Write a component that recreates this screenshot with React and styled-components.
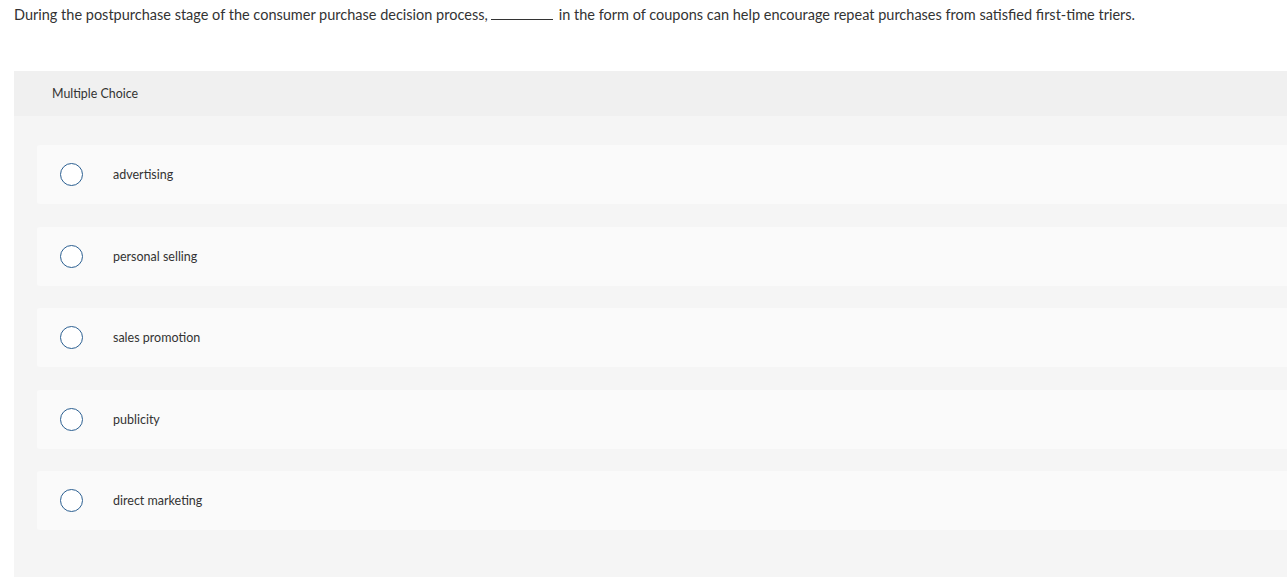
import React from 'react';
import styled, { createGlobalStyle } from 'styled-components';

const GlobalStyle = createGlobalStyle`
  html, body {
    margin: 0;
    padding: 0;
    background: #ffffff;
    overflow: hidden;
  }
  body {
    font-family: Lato, "Liberation Sans", Arial, sans-serif;
    color: #333333;
  }
`;

const Page = styled.div`
  width: 1300px;
  height: 577px;
  display: flex;
  flex-direction: column;
`;

const Question = styled.p`
  margin: 0;
  padding: 5px 0 0 14px;
  height: 71px;
  flex-shrink: 0;
  box-sizing: border-box;
  font-size: 14.5px;
  line-height: 20px;
  color: #333333;
`;

const Blank = styled.span`
  display: inline-block;
  width: 62px;
  height: 14px;
  margin: 0 6px 0 3px;
  border-bottom: 1px solid #333333;
  vertical-align: baseline;
`;

const Panel = styled.section`
  margin-left: 14px;
  flex: 1;
  background: #f5f5f5;
  display: flex;
  flex-direction: column;
`;

const PanelHeader = styled.div`
  height: 45px;
  flex-shrink: 0;
  background: #f0f0f0;
  padding-left: 38px;
  display: flex;
  align-items: center;
  font-size: 12.4px;
  color: #333333;
`;

const Options = styled.div`
  padding: 29px 0 0 23px;
  display: flex;
  flex-direction: column;
  gap: 22.5px;
`;

const Option = styled.label`
  height: 59px;
  background: #fafafa;
  border-radius: 3px;
  display: flex;
  align-items: center;
  padding-left: 23px;
  cursor: pointer;
`;

const Radio = styled.span`
  width: 21px;
  height: 21px;
  border: 1.6px solid #2b5f91;
  border-radius: 50%;
  background: #ffffff;
  flex-shrink: 0;
`;

const OptionText = styled.span`
  margin-left: 30px;
  font-size: 12.5px;
  color: #333333;
`;

const choices = [
  'advertising',
  'personal selling',
  'sales promotion',
  'publicity',
  'direct marketing',
];

export default function App() {
  return (
    <Page>
      <GlobalStyle />
      <Question>
        During the postpurchase stage of the consumer purchase decision process,
        <Blank />
        in the form of coupons can help encourage repeat purchases from satisfied first-time triers.
      </Question>
      <Panel>
        <PanelHeader>Multiple Choice</PanelHeader>
        <Options>
          {choices.map((choice) => (
            <Option key={choice}>
              <Radio />
              <OptionText>{choice}</OptionText>
            </Option>
          ))}
        </Options>
      </Panel>
    </Page>
  );
}
